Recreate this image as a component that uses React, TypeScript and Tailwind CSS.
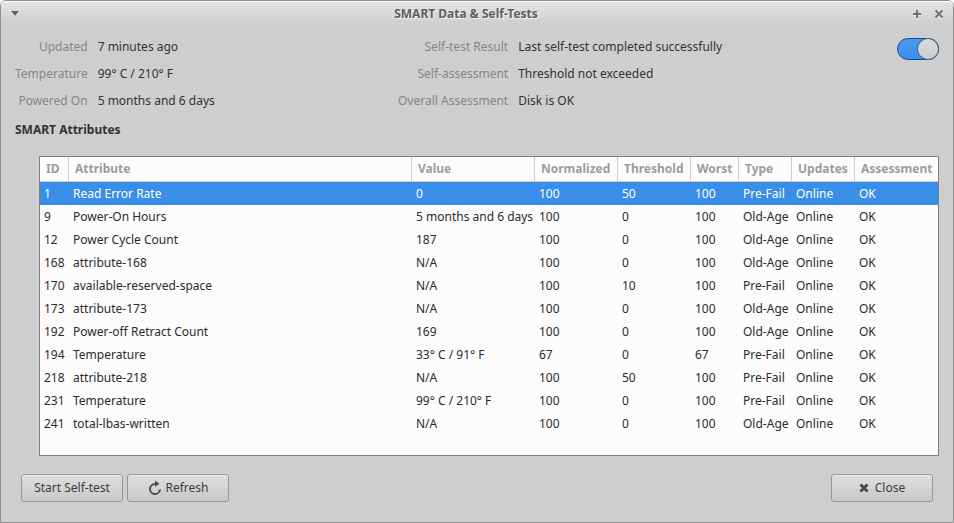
import { useState } from "react";

type Row = {
  id: number;
  attribute: string;
  value: string;
  normalized: number;
  threshold: number;
  worst: number;
  type: "Pre-Fail" | "Old-Age";
};

const rows: Row[] = [
  { id: 1, attribute: "Read Error Rate", value: "0", normalized: 100, threshold: 50, worst: 100, type: "Pre-Fail" },
  { id: 9, attribute: "Power-On Hours", value: "5 months and 6 days", normalized: 100, threshold: 0, worst: 100, type: "Old-Age" },
  { id: 12, attribute: "Power Cycle Count", value: "187", normalized: 100, threshold: 0, worst: 100, type: "Old-Age" },
  { id: 168, attribute: "attribute-168", value: "N/A", normalized: 100, threshold: 0, worst: 100, type: "Old-Age" },
  { id: 170, attribute: "available-reserved-space", value: "N/A", normalized: 100, threshold: 10, worst: 100, type: "Pre-Fail" },
  { id: 173, attribute: "attribute-173", value: "N/A", normalized: 100, threshold: 0, worst: 100, type: "Old-Age" },
  { id: 192, attribute: "Power-off Retract Count", value: "169", normalized: 100, threshold: 0, worst: 100, type: "Old-Age" },
  { id: 194, attribute: "Temperature", value: "33° C / 91° F", normalized: 67, threshold: 0, worst: 67, type: "Pre-Fail" },
  { id: 218, attribute: "attribute-218", value: "N/A", normalized: 100, threshold: 50, worst: 100, type: "Pre-Fail" },
  { id: 231, attribute: "Temperature", value: "99° C / 210° F", normalized: 100, threshold: 0, worst: 100, type: "Pre-Fail" },
  { id: 241, attribute: "total-lbas-written", value: "N/A", normalized: 100, threshold: 0, worst: 100, type: "Old-Age" },
];

const columns = [
  { label: "ID", width: "w-[29px]" },
  { label: "Attribute", width: "" },
  { label: "Value", width: "w-[123px]" },
  { label: "Normalized", width: "w-[83px]" },
  { label: "Threshold", width: "w-[73px]" },
  { label: "Worst", width: "w-12" },
  { label: "Type", width: "w-[53px]" },
  { label: "Updates", width: "w-[63px]" },
  { label: "Assessment", width: "w-[83px]" },
];

function Facts({ items }: { items: [string, string][] }) {
  return (
    <dl className="grid grid-cols-[auto_1fr] gap-x-2.5 gap-y-[11px] pt-px leading-4">
      {items.map(([term, text]) => (
        <div key={term} className="contents">
          <dt className="text-right text-[#868686]">{term}</dt>
          <dd className="text-[#333333]">{text}</dd>
        </div>
      ))}
    </dl>
  );
}

function PushButton({ icon, children }: { icon?: React.ReactNode; children: React.ReactNode }) {
  return (
    <button
      type="button"
      className="flex h-7 w-[102px] items-center justify-center gap-1 rounded-[3px] border border-[#979797] bg-linear-to-b from-[#dedede] to-[#c9c9c9] text-[#3c3c3c] shadow-[inset_0_1px_0_#f0f0f0]"
    >
      {icon}
      {children}
    </button>
  );
}

function RefreshIcon() {
  return (
    <svg width="14" height="16" viewBox="0 0 14 16" aria-hidden="true">
      <path d="M9 4 H8 A5 5 0 1 0 13 9.5" fill="none" stroke="#4e4e4e" strokeWidth="2" />
      <path d="M8 0.5 L12.5 3.8 L8 7 Z" fill="#4e4e4e" />
    </svg>
  );
}

function CrossIcon() {
  return (
    <svg width="10" height="10" viewBox="0 0 10 10" aria-hidden="true">
      <path d="M1.5 1.5 L8.5 8.5 M8.5 1.5 L1.5 8.5" stroke="#484848" strokeWidth="2.8" />
    </svg>
  );
}

export default function App() {
  const [enabled, setEnabled] = useState(true);
  const [selected, setSelected] = useState(1);

  return (
    <div className="min-h-screen bg-white">
      <div className="flex min-h-screen flex-col rounded-t-md border border-[#8f8f8f] bg-[#cecece] font-['Noto_Sans',sans-serif] text-[12px] leading-4">
        <header className="flex h-6 items-center justify-between rounded-t-[5px] bg-linear-to-b from-[#e6e6e6] to-[#cecece] px-2 pt-px shadow-[inset_0_1px_0_#ffffff]">
          <button type="button" aria-label="Window menu" className="flex h-4 w-[34px] items-center pl-0.5">
            <svg width="8" height="6" viewBox="0 0 8 6" aria-hidden="true">
              <path d="M0 1 H8 L4 6 Z" fill="#f4f4f4" />
              <path d="M0 0 H8 L4 5 Z" fill="#626262" />
            </svg>
          </button>
          <h1 className="font-bold text-[#606060] [text-shadow:1px_1px_0_#f2f2f2]">SMART Data &amp; Self-Tests</h1>
          <div className="flex w-14 justify-end gap-3 pr-px">
            <button type="button" aria-label="Maximize">
              <svg width="10" height="10" viewBox="0 0 10 10" aria-hidden="true">
                <path d="M5 2 V10 M1 6 H9" stroke="#f4f4f4" strokeWidth="2" />
                <path d="M5 1 V9 M1 5 H9" stroke="#727272" strokeWidth="2" />
              </svg>
            </button>
            <button type="button" aria-label="Close window">
              <svg width="10" height="10" viewBox="0 0 10 10" aria-hidden="true">
                <path d="M1.5 2.5 L8.5 9.5 M8.5 2.5 L1.5 9.5" stroke="#f4f4f4" strokeWidth="2" />
                <path d="M1.5 1.5 L8.5 8.5 M8.5 1.5 L1.5 8.5" stroke="#727272" strokeWidth="2" />
              </svg>
            </button>
          </div>
        </header>

        <main className="flex flex-1 flex-col px-3.5 pt-[13px]">
          <div className="flex items-start">
            <div className="w-[383px]">
              <Facts
                items={[
                  ["Updated", "7 minutes ago"],
                  ["Temperature", "99° C / 210° F"],
                  ["Powered On", "5 months and 6 days"],
                ]}
              />
            </div>
            <div className="flex-1">
              <Facts
                items={[
                  ["Self-test Result", "Last self-test completed successfully"],
                  ["Self-assessment", "Threshold not exceeded"],
                  ["Overall Assessment", "Disk is OK"],
                ]}
              />
            </div>
            <input
              type="checkbox"
              role="switch"
              aria-label="SMART monitoring"
              checked={enabled}
              onChange={(e) => setEnabled(e.target.checked)}
              className="flex h-[22px] w-[42px] appearance-none rounded-full border border-[#134e91] bg-[#b4b4b4] before:block before:h-5 before:w-5 before:rounded-full before:bg-linear-to-b before:from-[#dadada] before:to-[#cecece] before:shadow-[0_0_0_1px_#4b6788] before:content-[''] checked:justify-end checked:bg-linear-to-b checked:from-[#4a9af0] checked:to-[#3b8ee8]"
            />
          </div>

          <h2 className="mt-[13px] font-bold text-[#333333]">SMART Attributes</h2>

          <div className="mt-[18px] ml-6 flex-1 border border-[#808080] bg-[#fcfcfc]">
            <table className="w-full table-fixed border-collapse text-left whitespace-nowrap">
              <thead>
                <tr className="h-[25px]">
                  {columns.map((c) => (
                    <th
                      key={c.label}
                      scope="col"
                      className={`${c.width} p-0 pb-0.5 font-bold text-[#9c9c9c] shadow-[inset_-1px_-1px_0_#cdcdcd] last:shadow-[inset_0_-1px_0_#cdcdcd]`}
                    >
                      <span className="pl-1.5">{c.label}</span>
                    </th>
                  ))}
                </tr>
              </thead>
              <tbody>
                {rows.map((r) => (
                  <tr
                    key={r.id}
                    onClick={() => setSelected(r.id)}
                    aria-selected={r.id === selected}
                    className="h-[23px] text-[#2b2b2b] aria-selected:bg-[#398ee7] aria-selected:text-white"
                  >
                    {[r.id, r.attribute, r.value, r.normalized, r.threshold, r.worst, r.type, "Online", "OK"].map((v, i) => (
                      <td key={i} className="p-0 pl-1">
                        {v}
                      </td>
                    ))}
                  </tr>
                ))}
              </tbody>
            </table>
          </div>
        </main>

        <footer className="flex gap-1 px-5 pt-[18px] pb-5">
          <PushButton>Start Self-test</PushButton>
          <PushButton icon={<RefreshIcon />}>Refresh</PushButton>
          <div className="ml-auto">
            <PushButton icon={<CrossIcon />}>
              <span className="pl-0.5">Close</span>
            </PushButton>
          </div>
        </footer>
      </div>
    </div>
  );
}
